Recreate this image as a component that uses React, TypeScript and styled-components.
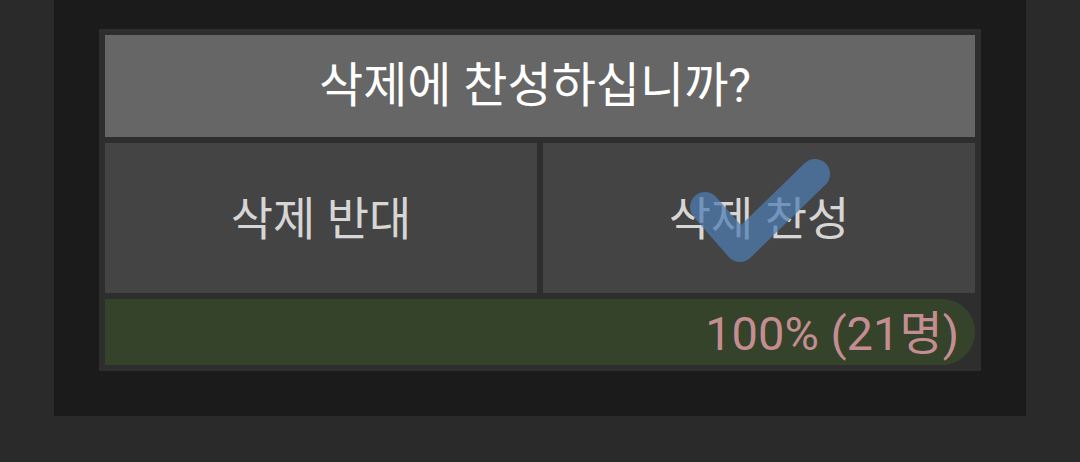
import * as React from "react";
import styled, {createGlobalStyle} from "styled-components";

const GlobalStyle = createGlobalStyle`
  html, body {
    margin: 0;
    padding: 0;
    background: #2a2a2a;
  }
  body {
    font-family: Roboto, "Noto Sans CJK KR", sans-serif;
  }
`;

const Page = styled.div`
  width: 1080px;
  height: 462px;
  padding-left: 54px;
  box-sizing: border-box;
`;

const Panel = styled.div`
  width: 972px;
  height: 416px;
  box-sizing: border-box;
  padding: 29px 45px 45px;
  background: #1b1b1b;
`;

const Card = styled.div`
  display: flex;
  flex-direction: column;
  gap: 6px;
  padding: 6px;
  background: #2e2e2e;
`;

const Title = styled.div`
  height: 102px;
  display: flex;
  align-items: center;
  justify-content: center;
  padding: 0 10px 10px 0;
  box-sizing: border-box;
  background: #666666;
  color: #ffffff;
  font-size: 48px;
`;

const Choices = styled.div`
  display: grid;
  grid-template-columns: 1fr 1fr;
  gap: 6px;
`;

const Choice = styled.div`
  position: relative;
  height: 150px;
  display: flex;
  align-items: center;
  justify-content: center;
  padding-bottom: 6px;
  background: #444444;
  color: #d6d6d6;
  font-size: 46px;
  box-sizing: border-box;
`;

const Check = styled.svg`
  position: absolute;
  inset: 0;
  width: 100%;
  height: 100%;
  opacity: 0.72;
  pointer-events: none;
`;

const Track = styled.div`
  height: 66px;
  background: #393939;
  border-radius: 0 33px 33px 0;
`;

const Fill = styled.div`
  height: 100%;
  display: flex;
  align-items: center;
  justify-content: flex-end;
  padding: 0 16px 5px 0;
  box-sizing: border-box;
  background: #34432a;
  border-radius: 0 33px 33px 0;
  color: #c48d92;
  font-size: 47px;
`;

const CheckMark = () => (
  <Check viewBox="0 0 432 150">
    <path
      d="M162 64 L197 104 L272 31"
      fill="none"
      stroke="#4e7cb2"
      strokeWidth={30}
      strokeLinecap="round"
      strokeLinejoin="round"
    />
  </Check>
);

const App = () => {
  const votes = 21;
  const percent = 100;

  return (
    <Page>
      <GlobalStyle />
      <Panel>
        <Card>
          <Title>삭제에 찬성하십니까?</Title>
          <Choices>
            <Choice>삭제 반대</Choice>
            <Choice>
              삭제 찬성
              <CheckMark />
            </Choice>
          </Choices>
          <Track>
            <Fill style={{width: `${percent}%`}}>
              {percent}% ({votes}명)
            </Fill>
          </Track>
        </Card>
      </Panel>
    </Page>
  );
};

export default App;
